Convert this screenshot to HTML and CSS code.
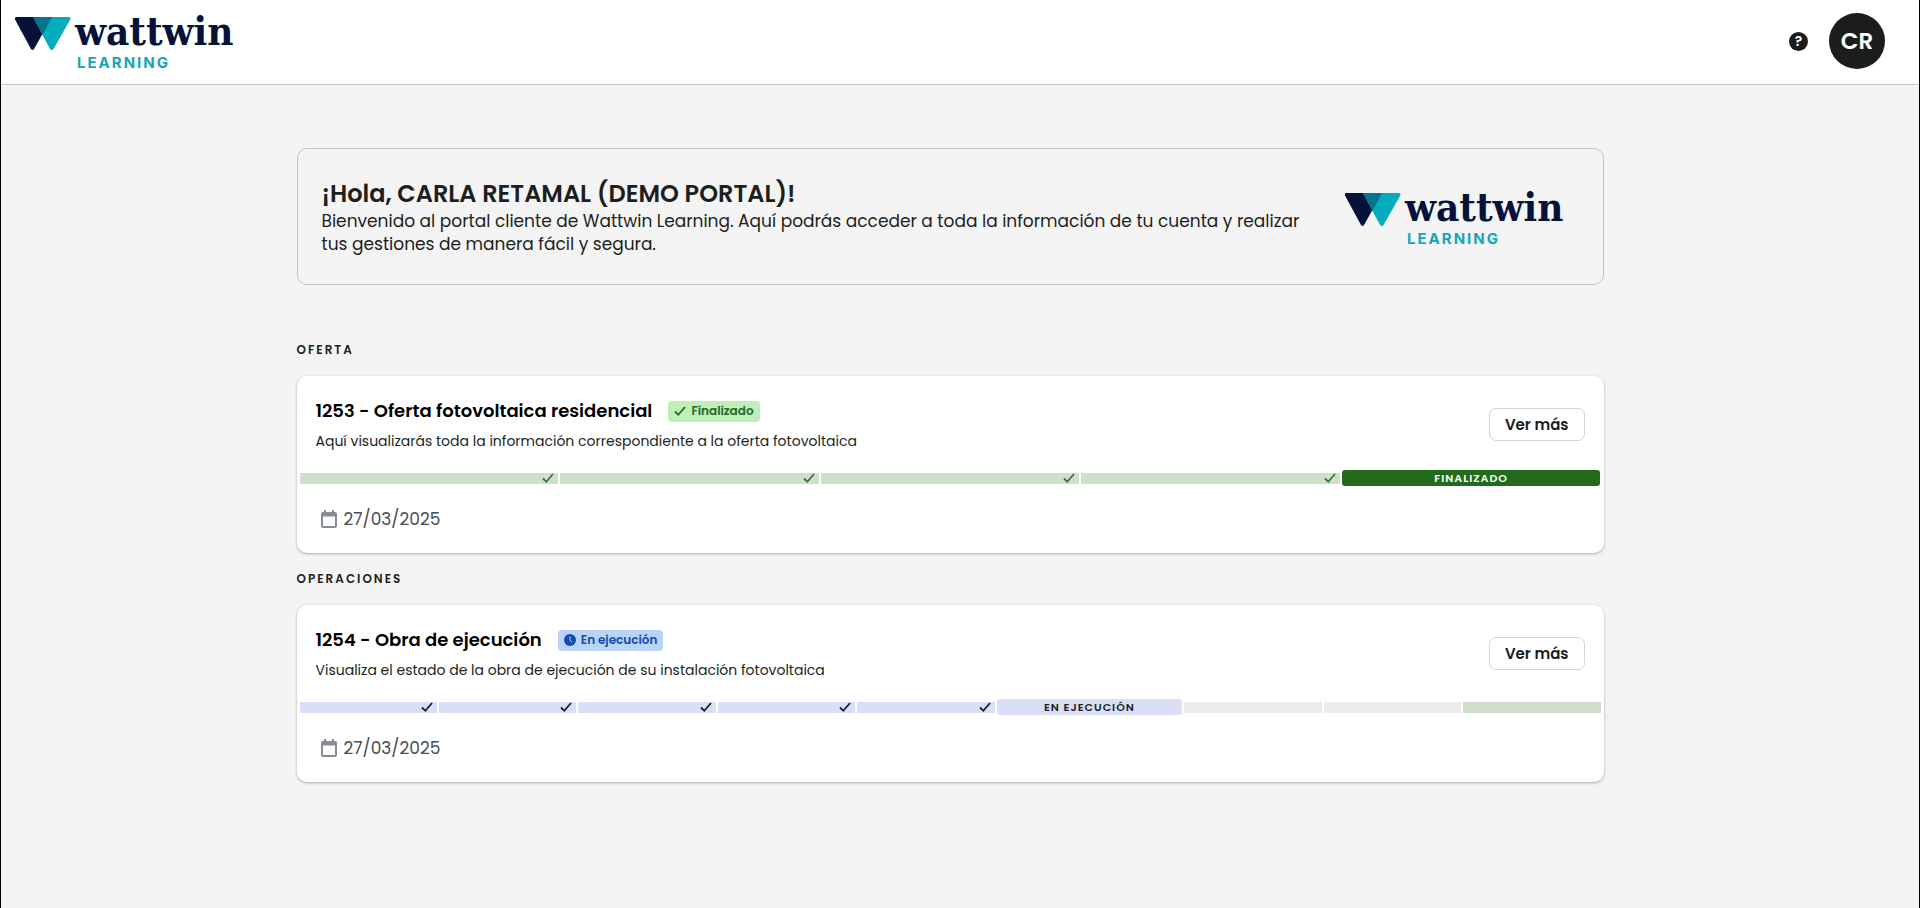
FILE: index.html
```html
<!DOCTYPE html>
<html lang="es">

<head>
    <meta charset="UTF-8">
    <meta name="viewport" content="width=device-width, initial-scale=1.0">
    <title>Wattwin Learning</title>
    <link rel="stylesheet" href="styles.css">
</head>

<body>
    <!-- Shared icons -->
    <svg class="sprite" aria-hidden="true">
        <symbol id="check" viewBox="0 0 12 12">
            <path d="M1 6.5l3.3 3.3L11 2" fill="none" stroke="currentColor" stroke-width="1.8" />
        </symbol>
        <symbol id="calendar" viewBox="0 0 16 18">
            <path fill="currentColor" fill-rule="evenodd"
                d="M3 0h2v2h6V0h2v2h1a2 2 0 0 1 2 2v12a2 2 0 0 1-2 2H2a2 2 0 0 1-2-2V4a2 2 0 0 1 2-2h1zM2 6.500v9.500h12V6.500z" />
        </symbol>
        <symbol id="logo" viewBox="0 0 220 58">
            <path class="logo-navy" d="M2 5H38L20 37Q18.500 39 17 37L1 7.500Q0.500 5 2 5z" />
            <path class="logo-cyan" d="M19 5H54.500Q57.500 5 56 8L39.500 37Q37.500 39 36 37z" />
            <path class="logo-teal" d="M19 5H38L28.500 23z" />
            <text class="logo-name" x="61" y="33">wattwin</text>
            <text class="logo-sub" x="63" y="56">LEARNING</text>
        </symbol>
    </svg>

    <header class="topbar">
        <a href="#" aria-label="Wattwin Learning">
            <svg class="logo"><use href="#logo" /></svg>
        </a>
        <div class="actions">
            <button class="help" aria-label="Ayuda">?</button>
            <button class="avatar">CR</button>
        </div>
    </header>

    <main class="page">
        <div class="content">
            <section class="welcome">
                <div class="welcome-text">
                    <h1>¡Hola, CARLA RETAMAL (DEMO PORTAL)!</h1>
                    <p>Bienvenido al portal cliente de Wattwin Learning. Aquí podrás acceder a toda la información de tu cuenta y realizar tus gestiones de manera fácil y segura.</p>
                </div>
                <svg class="logo"><use href="#logo" /></svg>
            </section>

            <h2 class="section-title">OFERTA</h2>
            <article class="card">
                <div class="card-head">
                    <div>
                        <div class="card-title">
                            <h3>1253 - Oferta fotovoltaica residencial</h3>
                            <span class="badge green"><svg><use href="#check" /></svg>Finalizado</span>
                        </div>
                        <p>Aquí visualizarás toda la información correspondiente a la oferta fotovoltaica</p>
                    </div>
                    <button class="more">Ver más</button>
                </div>
                <div class="steps">
                    <div class="step ok"><svg><use href="#check" /></svg></div>
                    <div class="step ok"><svg><use href="#check" /></svg></div>
                    <div class="step ok"><svg><use href="#check" /></svg></div>
                    <div class="step ok"><svg><use href="#check" /></svg></div>
                    <div class="step current finished">FINALIZADO</div>
                </div>
                <div class="date"><svg><use href="#calendar" /></svg>27/03/2025</div>
            </article>

            <h2 class="section-title">OPERACIONES</h2>
            <article class="card">
                <div class="card-head">
                    <div>
                        <div class="card-title">
                            <h3>1254 - Obra de ejecución</h3>
                            <span class="badge blue">
                                <svg viewBox="0 0 12 12"><circle cx="6" cy="6" r="6" fill="currentColor" /><path d="M6 2.500V6l2 2" fill="none" stroke="#b9d4f7" /></svg>En ejecución</span>
                        </div>
                        <p>Visualiza el estado de la obra de ejecución de su instalación fotovoltaica</p>
                    </div>
                    <button class="more">Ver más</button>
                </div>
                <div class="steps">
                    <div class="step done"><svg><use href="#check" /></svg></div>
                    <div class="step done"><svg><use href="#check" /></svg></div>
                    <div class="step done"><svg><use href="#check" /></svg></div>
                    <div class="step done"><svg><use href="#check" /></svg></div>
                    <div class="step done"><svg><use href="#check" /></svg></div>
                    <div class="step current running">EN EJECUCIÓN</div>
                    <div class="step"></div>
                    <div class="step"></div>
                    <div class="step ok"></div>
                </div>
                <div class="date"><svg><use href="#calendar" /></svg>27/03/2025</div>
            </article>
        </div>
    </main>
</body>

</html>
```
FILE: styles.css
```css
* {
    box-sizing: border-box;
}

body {
    margin: 0;
    min-height: 100vh;
    font-family: Poppins, Inter, sans-serif;
    color: #1c1f1d;
    background-color: #f4f4f4;
    border-left: 1px solid black;
    border-right: 1px solid black;
}

h1, h2, h3, p {
    margin: 0;
}

button {
    font-family: inherit;
    cursor: pointer;
}

.sprite {
    display: none;
}

/* Top bar */
.topbar {
    display: flex;
    justify-content: space-between;
    align-items: center;
    height: 85px;
    padding: 0 34px 2px 13px;
    background-color: #fefffe;
    border-bottom: 1px solid #c8c8c8;
}

.topbar a {
    display: flex;
}

.logo {
    width: 220px;
    height: 58px;
    flex-shrink: 0;
}

.logo-navy {
    fill: #06123a;
}

.logo-cyan {
    fill: #05abbf;
}

.logo-teal {
    fill: #08748c;
}

.logo-name {
    font: bold 40px "DejaVu Serif Condensed", "DejaVu Serif", serif;
    fill: #06123a;
}

.logo-sub {
    font: 700 15px Inter, sans-serif;
    letter-spacing: 2px;
    fill: #17a5b8;
}

.actions {
    display: flex;
    align-items: center;
    gap: 21px;
}

.help, .avatar {
    padding: 0;
    border: 0;
    border-radius: 50%;
    color: white;
    background-color: #1b1d1c;
}

.help {
    width: 19px;
    height: 19px;
    font-size: 14px;
    line-height: 19px;
    font-weight: 600;
}

.avatar {
    width: 56px;
    height: 56px;
    font-size: 23px;
    font-weight: 600;
}

/* Content */
.page {
    padding: 63px 20px 63px 0;
}

.content {
    max-width: 1307px;
    margin: 0 auto;
}

.welcome {
    display: flex;
    align-items: center;
    justify-content: space-between;
    gap: 20px;
    min-height: 137px;
    padding: 24px;
    border: 1px solid #c3c3c3;
    border-radius: 10px;
}

.welcome .logo {
    margin-right: 15px;
}

.welcome h1 {
    font-size: 24px;
    font-weight: 600;
    line-height: 32px;
}

.welcome p {
    font-size: 17px;
    line-height: 23px;
}

.section-title {
    font-size: 12px;
    line-height: 20px;
    font-weight: 600;
    letter-spacing: 2px;
    margin: 16px 0;
}

.welcome + .section-title {
    margin-top: 55px;
}

.card {
    min-height: 177px;
    background-color: #fefffe;
    border-radius: 10px;
    box-shadow: 0 1px 3px rgba(0, 0, 0, 0.3);
}

.card-head {
    display: flex;
    align-items: flex-start;
    justify-content: space-between;
    padding: 20px 19px 14px;
}

.card-title {
    display: flex;
    align-items: center;
    gap: 16px;
}

.card-title h3 {
    font-size: 18px;
    line-height: 30px;
    font-weight: 600;
    color: black;
}

.card-head p {
    font-size: 14px;
    line-height: 30px;
}

.badge {
    display: flex;
    align-items: center;
    gap: 5px;
    height: 21px;
    padding: 0 6px;
    border-radius: 4px;
    font-size: 12px;
    font-weight: 600;
}

.badge svg {
    width: 12px;
    height: 12px;
}

.green {
    color: #24692b;
    background-color: #bdefb7;
}

.blue {
    color: #114caf;
    background-color: #b9d4f7;
}

.more {
    height: 33px;
    margin-top: 12px;
    padding: 0 15px;
    border: 1px solid #d4d4d4;
    border-radius: 7px;
    font-size: 15px;
    font-weight: 600;
    color: #1c1f1d;
    background-color: white;
}

/* Progress steps */
.steps {
    display: flex;
    align-items: center;
    gap: 2px;
    padding: 0 3px;
}

.step {
    flex: 20 1 0;
    display: flex;
    align-items: center;
    justify-content: flex-end;
    height: 11px;
    background-color: #ececec;
}

.step svg {
    width: 12px;
    height: 12px;
    margin-right: 4px;
}

.ok {
    color: #3a7339;
    background-color: #cfdfcb;
}

.done {
    background-color: #d8dff7;
}

.current {
    justify-content: center;
    height: 16px;
    border-radius: 3px;
    font-size: 11px;
    font-weight: 600;
    letter-spacing: 1px;
}

.finished {
    color: white;
    background-color: #216b1a;
}

.running {
    flex-grow: 27;
    background-color: #d8dff7;
}

.date {
    display: flex;
    align-items: center;
    gap: 7px;
    padding: 21px 24px 20px;
    font-size: 17px;
    line-height: 24px;
    color: #4a4d52;
}

.date svg {
    width: 16px;
    height: 18px;
    color: #868c96;
}
```
